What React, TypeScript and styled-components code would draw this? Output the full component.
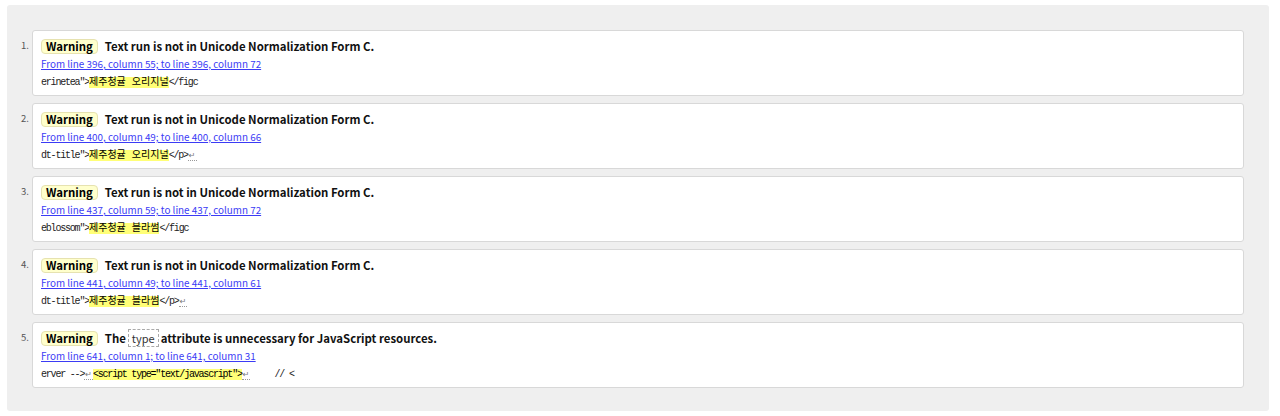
import React from 'react'
import styled, {createGlobalStyle} from 'styled-components'

const GlobalStyle = createGlobalStyle`
  html, body {
    margin: 0;
    padding: 0;
    background: #fff;
  }
  body {
    padding: 5px 11px 6px 7px;
    font-family: "Noto Sans CJK KR", "Noto Sans", sans-serif;
  }
`;

const Panel = styled.div`
  background: #efefef;
  border-radius: 3px;
  padding: 25px 25px 23px 25px;
`;

const List = styled.ol`
  margin: 0;
  padding: 0;
  list-style: none;
  display: flex;
  flex-direction: column;
  gap: 7px;
`;

const Item = styled.li`
  display: flex;
  align-items: flex-start;
  position: relative;
`;

const Num = styled.span`
  position: absolute;
  left: -11px;
  top: 8px;
  font-size: 9.5px;
  color: #555;
`;

const Card = styled.div`
  flex: 1;
  height: 66px;
  box-sizing: border-box;
  background: #fff;
  border: 1px solid #d8d8d8;
  border-radius: 3px;
  padding: 7px 8px 0 8px;
`;

const Title = styled.div`
  display: flex;
  align-items: center;
  gap: 7px;
  height: 16px;
  font-size: 11.4px;
  font-weight: 700;
  color: #111;
  white-space: nowrap;
`;

const Badge = styled.span`
  display: inline-block;
  background: #ffffcc;
  border: 1px solid #e6e2b0;
  border-radius: 4px;
  padding: 0 4px;
  line-height: 13px;
  font-size: 11.4px;
  font-weight: 700;
  color: #000;
`;

const Code = styled.code`
  font-family: "Noto Sans CJK KR", "Noto Sans", sans-serif;
  font-weight: 400;
  font-size: 11px;
  color: #333;
  border: 1px dashed #aaa;
  padding: 0 3px;
  margin: 0 2px;
  line-height: 14px;
`;

const Loc = styled.a`
  display: block;
  margin-top: 4px;
  font-size: 9.9px;
  line-height: 13px;
  color: #3b3bf5;
  text-decoration: underline;
  white-space: nowrap;
`;

const Extract = styled.div`
  margin-top: 4px;
  font-family: "Liberation Mono", "Noto Sans CJK KR", monospace;
  font-size: 10px;
  letter-spacing: -1.2px;
  line-height: 15px;
  color: #222;
  white-space: pre;
`;

const Mark = styled.mark<{$cjk?: boolean}>`
  background: #ffff77;
  color: #000;
  letter-spacing: ${p => (p.$cjk ? '0' : '-1.2px')};
`;

const Lf = styled.span`
  font-family: "DejaVu Sans", sans-serif;
  color: #777;
  border-bottom: 1px dotted #999;
  font-size: 8px;
  letter-spacing: 0;
  padding: 0 1px;
`;

type Msg = {
  title: React.ReactNode;
  loc: string;
  extract: React.ReactNode;
};

const NFC = 'Text run is not in Unicode Normalization Form C.';

const messages: Msg[] = [
  {
    title: NFC,
    loc: 'From line 396, column 55; to line 396, column 72',
    extract: <>erinetea"&gt;<Mark $cjk>제주청귤 오리지널</Mark>&lt;/figc</>,
  },
  {
    title: NFC,
    loc: 'From line 400, column 49; to line 400, column 66',
    extract: <>dt-title"&gt;<Mark $cjk>제주청귤 오리지널</Mark>&lt;/p&gt;<Lf>↵</Lf></>,
  },
  {
    title: NFC,
    loc: 'From line 437, column 59; to line 437, column 72',
    extract: <>eblossom"&gt;<Mark $cjk>제주청귤 블라썸</Mark>&lt;/figc</>,
  },
  {
    title: NFC,
    loc: 'From line 441, column 49; to line 441, column 61',
    extract: <>dt-title"&gt;<Mark $cjk>제주청귤 블라썸</Mark>&lt;/p&gt;<Lf>↵</Lf></>,
  },
  {
    title: <>The<Code>type</Code>attribute is unnecessary for JavaScript resources.</>,
    loc: 'From line 641, column 1; to line 641, column 31',
    extract: <>erver --&gt;<Lf>↵</Lf><Mark>&lt;script type="text/javascript"&gt;</Mark><Lf>↵</Lf>{'     // <'}</>,
  },
];

export default function App() {
  return (
    <>
      <GlobalStyle/>
      <Panel>
        <List>
          {messages.map((m, i) => (
            <Item key={i}>
              <Num>{i + 1}.</Num>
              <Card>
                <Title>
                  <Badge>Warning</Badge>
                  <span>{m.title}</span>
                </Title>
                <Loc href="#">{m.loc}</Loc>
                <Extract>{m.extract}</Extract>
              </Card>
            </Item>
          ))}
        </List>
      </Panel>
    </>
  );
}
